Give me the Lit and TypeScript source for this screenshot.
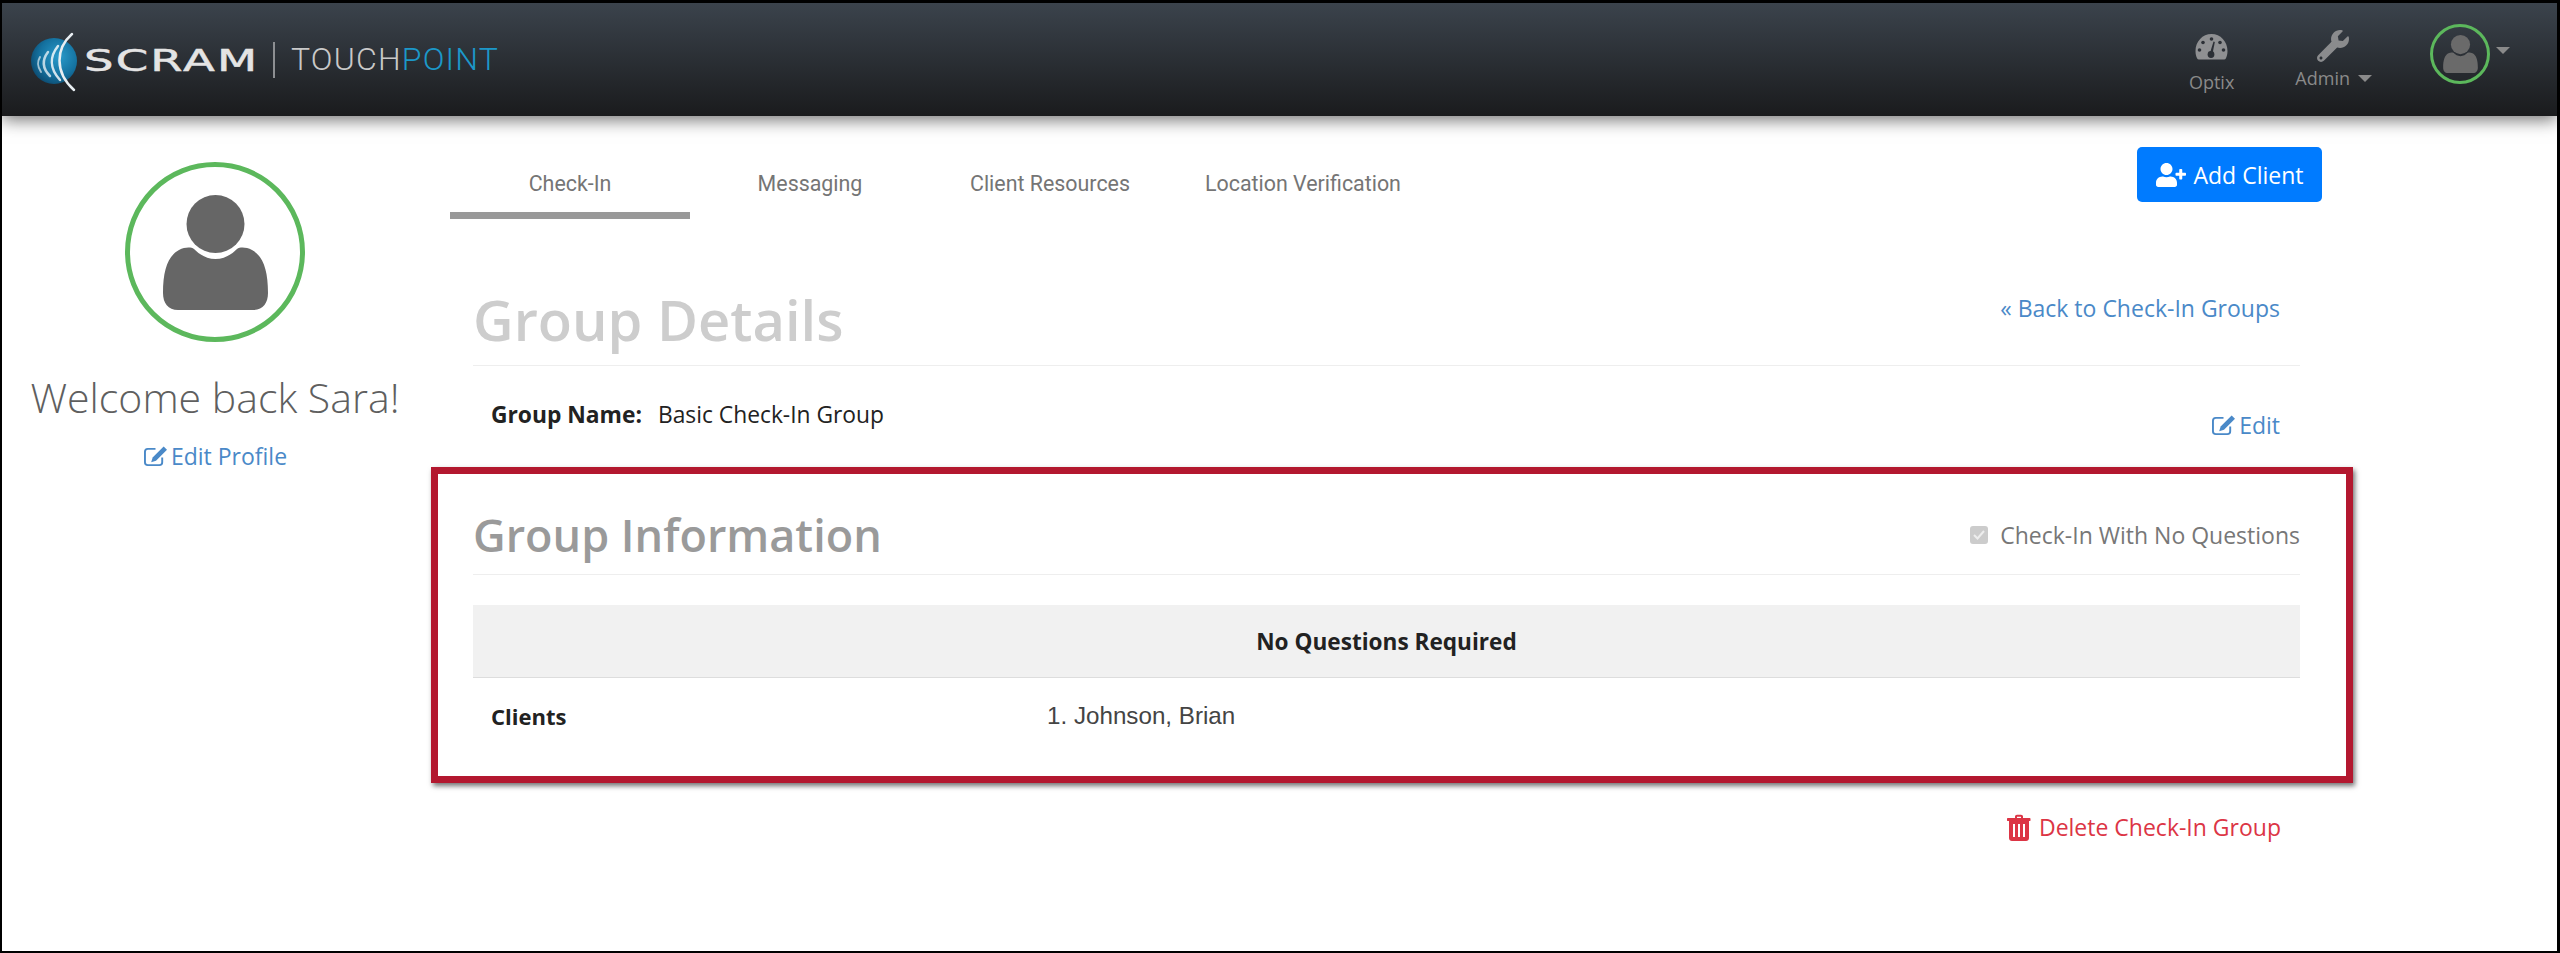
import { LitElement, html, css, svg } from "lit";
import { customElement } from "lit/decorators.js";

const person = (cls: string) => html`<svg class=${cls} viewBox="0 0 105 115" aria-hidden="true"><circle cx="52.500" cy="29" r="29"/><path d="M16 55C22 52 28 52 31 54C37 60 44 64 52.500 64C61 64 68 60 74 54C77 52 83 52 89 55C100 61 105 75 105 98C105 108 100 115 90 115L15 115C5 115 0 108 0 98C0 75 5 61 16 55Z"/></svg>`;
const editIcon = html`<svg class="ico-edit" viewBox="0 0 26 24" aria-hidden="true"><path d="M13 4H5a3 3 0 0 0-3 3v11a3 3 0 0 0 3 3h12a3 3 0 0 0 3-3v-5" fill="none" stroke="currentColor" stroke-width="2"/><path d="M21.500 1.500l3.500 3.500-11.500 11.500-5 1.500 1.500-5z" fill="currentColor"/></svg>`;
const caret = html`<span class="caret"></span>`;

@customElement("app-root")
export class AppRoot extends LitElement {
  static styles = css`
    :host { display: block; box-sizing: border-box; height: 953px; background: #fff; border-style: solid; border-color: #000; border-width: 3px 3px 2px 2px; font-family: "Open Sans", sans-serif; overflow: hidden; }
    * { box-sizing: border-box; }
    a { text-decoration: none; color: #4a89c8; }
    header { position: relative; z-index: 2; height: 113px; display: flex; align-items: flex-start; background: linear-gradient(#3b434c, #1a1b1d); box-shadow: 0 4px 16px rgba(0,0,0,.55); }
    .logo { display: flex; align-items: flex-start; margin: 27px 0 0 26px; width: 500px; height: 62px; }
    .globe { width: 52px; height: 62px; flex: none; }
    .scram { width: 174px; margin: 14px 0 0 4px; font: 400 30px/34px "DejaVu Sans", sans-serif; -webkit-text-stroke: .5px #e4e4e4; color: #e4e4e4; letter-spacing: 1.400px; transform: scaleX(1.55); transform-origin: 0 50%; }
    .logo-sep { width: 2px; height: 36px; background: #8d8f92; margin: 12px 16px 0 15px; flex: none; }
    .touch { margin-top: 10px; font: 300 32px/38px Roboto, sans-serif; letter-spacing: 1.200px; color: #c9c9c9; white-space: nowrap; }
    .touch b { font-weight: 300; color: #1c98c9; }
    nav { margin-left: auto; display: flex; align-items: flex-start; color: #8a8a8a; font-size: 18px; }
    .nav-item { display: flex; flex-direction: column; align-items: center; }
    .optix { margin-right: 60px; padding-top: 30px; }
    .admin { margin-right: 59px; padding-top: 27px; }
    .nav-item span.lbl { line-height: 24px; margin-top: 10px; white-space: nowrap; }
    .nav-ico { width: 33px; height: 27px; fill: #8f9092; display: block; }
    .wrench { width: 32px; height: 32px; fill: #8a8b8d; display: block; }
    .admin span.lbl { margin-top: 4px; position: relative; left: 1px; }
    .caret { display: inline-block; width: 0; height: 0; border: 7px solid transparent; border-top-color: currentColor; border-bottom-width: 0; vertical-align: 3px; margin-left: 8px; }
    .me { display: flex; align-items: center; margin: 21px 47px 0 0; }
    .me .caret { margin-left: 6px; margin-bottom: 8px; }
    .ring-sm { width: 60px; height: 60px; border: 3px solid #5cb85c; border-radius: 50%; display: flex; justify-content: center; align-items: center; }
    .p-sm { width: 35px; height: 38px; fill: #6a6a6a; }
    .main { display: flex; }
    aside { width: 429px; flex: none; padding: 46px 3px 0 0; display: flex; flex-direction: column; align-items: center; }
    .ring { width: 180px; height: 180px; border: 5px solid #5cb85c; border-radius: 50%; display: flex; justify-content: center; align-items: center; }
    .p-lg { width: 105px; height: 115px; fill: #666; margin-top: 1px; }
    h2.welcome { margin: 28px 0 0; font-weight: 300; font-size: 41px; line-height: 54px; color: #5f5f5f; white-space: nowrap; }
    .edit-p { margin-top: 16px; font-size: 23px; line-height: 32px; white-space: nowrap; }
    .ico-edit { width: 25px; height: 23px; vertical-align: -3px; margin-right: 3px; }
    .content { width: 1922px; flex: none; }
    .tabs-row { display: flex; justify-content: space-between; align-items: flex-start; padding: 31px 31px 0 19px; }
    .tabs { display: flex; }
    .tab { min-width: 240px; height: 72px; padding: 7px 35px 0; display: flex; align-items: center; justify-content: center; font: 400 21.400px Roboto, sans-serif; color: #757575; border-bottom: 7px solid transparent; white-space: nowrap; }
    .tab.on { border-bottom-color: #999; }
    .add { width: 185px; height: 55px; background: #007bff; color: #fff; border-radius: 5px; display: flex; align-items: center; justify-content: center; gap: 8px; font-size: 23px; }
    .add svg { width: 30px; height: 24px; fill: #fff; }
    .details { padding: 73px 53px 0 42px; }
    .sec-head { display: flex; justify-content: space-between; border-bottom: 1px solid #eee; }
    h1 { margin: 0; font-weight: 600; font-size: 56px; line-height: 54px; color: #cdcdcd; padding-bottom: 19px; white-space: nowrap; }
    .link { font-size: 23px; line-height: 32px; padding-right: 20px; white-space: nowrap; }
    .gname-row { display: flex; justify-content: space-between; height: 101px; padding-left: 18px; }
    .gname { margin-top: 33px; font-size: 22.800px; line-height: 32px; color: #222; white-space: nowrap; }
    .gname b { font-weight: 700; margin-right: 16px; }
    .edit { margin-top: 43px; }
    .box { height: 316px; border: 7px solid #b3182f; box-shadow: 2px 3px 5px rgba(0,0,0,.55); padding: 38px 46px 0 35px; }
    h3 { margin: 0; font-weight: 600; font-size: 45px; line-height: 46px; color: #9a9a9a; padding-bottom: 16px; white-space: nowrap; }
    .chk { display: flex; align-items: center; height: 46px; font-size: 23px; color: #777; white-space: nowrap; }
    .box-ck { width: 18px; height: 18px; border-radius: 3px; background: #ccc; margin-right: 12px; display: flex; align-items: center; justify-content: center; }
    .box-ck svg { width: 14px; height: 14px; fill: none; stroke: #eee; stroke-width: 2; }
    .thead { margin-top: 30px; height: 73px; background: #f1f1f1; border-bottom: 1px solid #ddd; display: flex; align-items: center; justify-content: center; font-weight: 700; font-size: 22.600px; color: #222; }
    .trow { display: grid; grid-template-columns: 574px 1fr; padding-top: 22px; line-height: 32px; }
    .trow b { padding-left: 18px; font-size: 22px; color: #222; }
    .trow span { font: 24.200px/32px "Liberation Sans", sans-serif; color: #444; }
    .del-row { display: flex; justify-content: flex-end; margin-top: 28px; padding-right: 72px; }
    .del { color: #dc3545; font-size: 23px; line-height: 32px; white-space: nowrap; display: flex; align-items: center; gap: 8px; }
    .del svg { width: 24px; height: 27px; fill: #dc3545; }
  `;

  render() {
    return html`
      <header>
        <div class="logo">
          <svg class="globe" viewBox="0 0 52 62" aria-hidden="true">
            <defs><radialGradient id="g" cx="0.6" cy="0.4" r="0.7"><stop offset="0" stop-color="#2a9bcb"/><stop offset="0.6" stop-color="#14719f"/><stop offset="1" stop-color="#0b4468"/></radialGradient></defs>
            <circle cx="26" cy="31" r="23" fill="url(#g)"/>
            ${svg`<g fill="none" stroke="#fff" stroke-linecap="round">
              <path d="M44 4C28 18 26 42 46 60" stroke-width="2.500" stroke="#e8eef2"/>
              <path d="M30 16C22 26 21 38 32 50" stroke-width="2.500" opacity=".8"/>
              <path d="M20 22C14 30 14 38 22 46" stroke-width="2.500" opacity=".7"/>
              <path d="M12 27C9 32 9 36 13 42" stroke-width="2" opacity=".6"/>
            </g>`}
          </svg>
          <div class="scram">SCRAM</div>
          <div class="logo-sep"></div>
          <div class="touch">TOUCH<b>POINT</b></div>
        </div>
        <nav>
          <div class="nav-item optix">
            <svg class="nav-ico" viewBox="0 0 33 27" aria-hidden="true">
              <path d="M16.500 1C7.500 1 .5 8.500 .5 18c0 3 .7 5.500 1.700 7.500.3.600.9 1 1.600 1h25.400c.7 0 1.300-.4 1.600-1 1-2 1.700-4.500 1.700-7.500C32.500 8.500 25.500 1 16.500 1z"/>
              <g fill="#2c3036"><circle cx="16.500" cy="6" r="1.800"/><circle cx="8" cy="9.500" r="1.800"/><circle cx="25" cy="9.500" r="1.800"/><circle cx="4.500" cy="17" r="1.800"/><circle cx="28.500" cy="17" r="1.800"/><circle cx="16" cy="21.500" r="3.400"/><path d="M15 20L18.500 8.500l1.300.4L17.500 21z"/></g>
            </svg>
            <span class="lbl">Optix</span>
          </div>
          <div class="nav-item admin">
            <svg class="wrench" viewBox="0 0 512 512" aria-hidden="true"><path d="M507.730 109.100c-2.240-9.030-13.540-12.090-20.120-5.510l-74.360 74.360-67.880-11.310-11.310-67.880 74.360-74.360c6.620-6.620 3.430-17.900-5.660-20.160-47.380-11.740-99.550.91-136.580 37.930-39.640 39.640-50.550 97.100-34.050 147.200L18.740 402.760c-24.990 24.990-24.990 65.510 0 90.500 24.990 24.990 65.510 24.990 90.500 0l213.210-213.210c50.120 16.710 107.470 5.680 147.370-34.220 37.070-37.070 49.700-89.320 37.910-136.730zM64 472c-13.250 0-24-10.750-24-24 0-13.260 10.750-24 24-24s24 10.740 24 24c0 13.250-10.750 24-24 24z"/></svg>
            <span class="lbl">Admin${caret}</span>
          </div>
          <div class="me">
            <div class="ring-sm">${person("p-sm")}</div>${caret}
          </div>
        </nav>
      </header>
      <div class="main">
        <aside>
          <div class="ring">${person("p-lg")}</div>
          <h2 class="welcome">Welcome back Sara!</h2>
          <a class="edit-p" href="#">${editIcon}Edit Profile</a>
        </aside>
        <div class="content">
          <div class="tabs-row">
            <div class="tabs">
              <div class="tab on">Check-In</div>
              <div class="tab">Messaging</div>
              <div class="tab">Client Resources</div>
              <div class="tab">Location Verification</div>
            </div>
            <a class="add" href="#">
              <svg viewBox="0 0 640 512" aria-hidden="true"><path d="M624 208h-64v-64c0-8.800-7.200-16-16-16h-32c-8.800 0-16 7.200-16 16v64h-64c-8.800 0-16 7.200-16 16v32c0 8.800 7.200 16 16 16h64v64c0 8.800 7.200 16 16 16h32c8.800 0 16-7.200 16-16v-64h64c8.800 0 16-7.200 16-16v-32c0-8.800-7.200-16-16-16zm-400 48c70.700 0 128-57.300 128-128S294.700 0 224 0 96 57.300 96 128s57.300 128 128 128zm89.600 32h-16.700c-22.200 10.200-46.900 16-72.900 16s-50.600-5.800-72.900-16h-16.700C60.200 288 0 348.200 0 422.400V464c0 26.500 21.500 48 48 48h352c26.500 0 48-21.500 48-48v-41.600c0-74.200-60.200-134.400-134.400-134.400z"/></svg>
              Add Client
            </a>
          </div>
          <div class="details">
            <div class="sec-head">
              <h1>Group Details</h1>
              <a class="link" href="#">« Back to Check-In Groups</a>
            </div>
            <div class="gname-row">
              <div class="gname"><b>Group Name:</b>Basic Check-In Group</div>
              <a class="link edit" href="#">${editIcon}Edit</a>
            </div>
          </div>
          <section class="box">
            <div class="sec-head">
              <h3>Group Information</h3>
              <label class="chk"><span class="box-ck"><svg viewBox="0 0 14 14"><path d="M2 7l3.500 3.500L12 3"/></svg></span>Check-In With No Questions</label>
            </div>
            <div class="thead">No Questions Required</div>
            <div class="trow"><b>Clients</b><span>1. Johnson, Brian</span></div>
          </section>
          <div class="del-row">
            <a class="del" href="#">
              <svg viewBox="0 0 24 27" aria-hidden="true"><path d="M8 4V2.500C8 1.500 9 .8 10 .8h4c1 0 2 .7 2 1.700V4h6.500c.6 0 1 .4 1 1v1.500c0 .3-.2.5-.5.5H22v17c0 1.700-1.300 3-3 3H5c-1.700 0-3-1.300-3-3V7H.5C.2 7 0 6.800 0 6.500V5c0-.6.4-1 1-1zm2 0h4V2.800h-4zM6 10v13h2V10zm5 0v13h2V10zm5 0v13h2V10z" fill-rule="evenodd"/></svg>
              Delete Check-In Group
            </a>
          </div>
        </div>
      </div>
    `;
  }
}
